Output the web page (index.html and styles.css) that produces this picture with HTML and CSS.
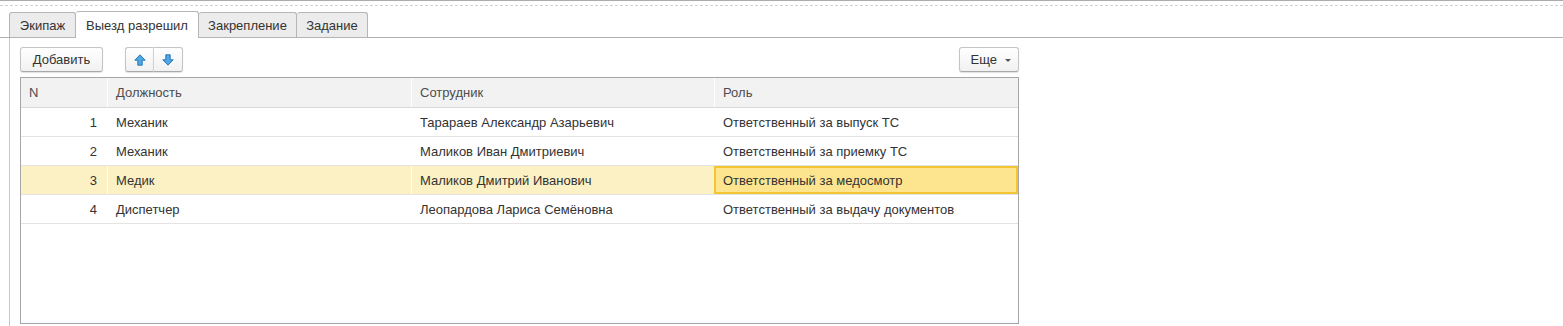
FILE: index.html
```html
<!DOCTYPE html>
<html lang="ru">
<head>
    <meta charset="UTF-8" />
    <title>Выезд разрешил</title>
    <link rel="stylesheet" href="styles.css">
</head>
<body>
    <div class="top-line"></div>
    <div class="dash-line"></div>

    <div class="tabs">
        <div class="tab tab-crew">Экипаж</div>
        <div class="tab tab-allowed active">Выезд разрешил</div>
        <div class="tab tab-fix">Закрепление</div>
        <div class="tab tab-task">Задание</div>
    </div>

    <div class="panel">
        <div class="content">
            <div class="toolbar">
                <button class="btn btn-add">Добавить</button>
                <div class="btn-group">
                    <button class="btn btn-arrow" title="Вверх">
                        <svg width="12" height="12" viewBox="0 0 12 12"><path d="M6 0.8 L11.2 6.2 L8.2 6.2 L8.2 11.2 L3.8 11.2 L3.8 6.2 L0.8 6.2 Z" fill="#4ea6e2" stroke="#2b78b8" stroke-width="1" stroke-linejoin="round"/></svg>
                    </button>
                    <button class="btn btn-arrow" title="Вниз">
                        <svg width="12" height="12" viewBox="0 0 12 12"><path d="M6 11.2 L11.2 5.8 L8.2 5.8 L8.2 0.8 L3.8 0.8 L3.8 5.8 L0.8 5.8 Z" fill="#4ea6e2" stroke="#2b78b8" stroke-width="1" stroke-linejoin="round"/></svg>
                    </button>
                </div>
                <button class="btn btn-more">Еще <span class="caret"></span></button>
            </div>

            <div class="grid">
                <div class="row head">
                    <div class="cell">N</div>
                    <div class="cell">Должность</div>
                    <div class="cell">Сотрудник</div>
                    <div class="cell">Роль</div>
                </div>
                <div class="row">
                    <div class="cell num">1</div>
                    <div class="cell">Механик</div>
                    <div class="cell">Тарараев Александр Азарьевич</div>
                    <div class="cell">Ответственный за выпуск ТС</div>
                </div>
                <div class="row">
                    <div class="cell num">2</div>
                    <div class="cell">Механик</div>
                    <div class="cell">Маликов Иван Дмитриевич</div>
                    <div class="cell">Ответственный за приемку ТС</div>
                </div>
                <div class="row current">
                    <div class="cell num">3</div>
                    <div class="cell">Медик</div>
                    <div class="cell">Маликов Дмитрий Иванович</div>
                    <div class="cell focused">Ответственный за медосмотр</div>
                </div>
                <div class="row">
                    <div class="cell num">4</div>
                    <div class="cell">Диспетчер</div>
                    <div class="cell">Леопардова Лариса Семёновна</div>
                    <div class="cell">Ответственный за выдачу документов</div>
                </div>
            </div>
        </div>
    </div>
</body>
</html>
```

FILE: styles.css
```css
body {
    margin: 0;
    padding: 0;
    font-family: Arial, "Liberation Sans", sans-serif;
    font-size: 13px;
    color: #333;
    background: #fff;
    height: 326px;
    overflow: hidden;
}

.top-line {
    border-top: 1px solid #ababab;
}

.dash-line {
    margin-top: 4px;
    border-top: 1px dashed #cfcfcf;
}

.tabs {
    display: flex;
    align-items: flex-end;
    height: 27px;
    margin-top: 4px;
    padding-left: 9px;
    border-bottom: 1px solid #b3b3b3;
}

.tab {
    height: 25px;
    line-height: 25px;
    box-sizing: border-box;
    text-align: center;
    white-space: nowrap;
    background: #ececec;
    border: 1px solid #b5b5b5;
    border-bottom: none;
    border-left: none;
    border-radius: 3px 3px 0 0;
}

.tab:first-child {
    border-left: 1px solid #b5b5b5;
}

.tab-crew { width: 67px; }
.tab-allowed { width: 123px; }
.tab-fix { width: 98px; }
.tab-task { width: 71px; }

.tab.active {
    height: 27px;
    line-height: 27px;
    margin-bottom: -1px;
    background: #fff;
}

.panel {
    margin-left: 9px;
    border-left: 1px solid #c6c6c6;
    height: 288px;
    padding: 9px 0 0 10px;
    box-sizing: border-box;
}

.content {
    width: 999px;
}

.toolbar {
    display: flex;
    align-items: center;
    height: 25px;
}

.btn {
    height: 25px;
    margin: 0;
    font-family: inherit;
    font-size: 13px;
    color: #333;
    background: linear-gradient(to bottom, #ffffff, #f1f1f1);
    border: 1px solid #c4c4c4;
    border-bottom-color: #a9a9a9;
    border-radius: 3px;
    box-shadow: 0 1px 1px rgba(0, 0, 0, 0.12);
    padding: 0;
    cursor: pointer;
}

.btn-add {
    width: 83px;
}

.btn-group {
    display: flex;
    margin-left: 22px;
}

.btn-arrow {
    display: flex;
    align-items: center;
    justify-content: center;
    width: 29px;
    border-radius: 0;
}

.btn-arrow:first-child {
    border-radius: 3px 0 0 3px;
    border-right: none;
    width: 28px;
}

.btn-arrow:last-child {
    border-radius: 0 3px 3px 0;
    border-left: 1px solid #d0d0d0;
    width: 30px;
}

.btn-more {
    margin-left: auto;
    width: 60px;
    padding-left: 3px;
}

.caret {
    display: inline-block;
    width: 0;
    height: 0;
    margin-left: 4px;
    vertical-align: middle;
    border-left: 3px solid transparent;
    border-right: 3px solid transparent;
    border-top: 3px solid #555;
}

.grid {
    margin-top: 5px;
    height: 247px;
    box-sizing: border-box;
    border: 1px solid #a6a6a6;
}

.row {
    display: grid;
    grid-template-columns: 86px 304px 303px 304px;
    height: 29px;
    box-sizing: border-box;
    border-bottom: 1px solid #e3e3e3;
}

.row.head {
    background: #f2f2f2;
    color: #4d4d4d;
    height: 30px;
    border-bottom-color: #dadada;
}

.cell {
    display: flex;
    align-items: center;
    padding-left: 8px;
    border-left: 1px solid #fff;
    white-space: nowrap;
    overflow: hidden;
}

.cell:first-child {
    border-left: none;
}

.cell.num {
    justify-content: flex-end;
    padding-right: 10px;
}

.row.current {
    background: #fcf1c5;
}

.cell.focused {
    background: #fde48f;
    border: 2px solid #f4c532;
    padding-left: 7px;
}
```
